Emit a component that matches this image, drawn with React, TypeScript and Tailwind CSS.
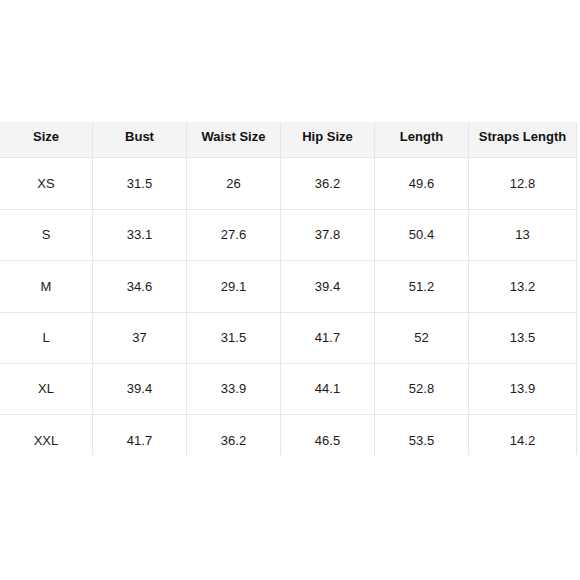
const HEADERS = ["Size", "Bust", "Waist Size", "Hip Size", "Length", "Straps Length"];

const ROWS: { h: string; cells: string[] }[] = [
  { h: "h-[52px]", cells: ["XS", "31.5", "26", "36.2", "49.6", "12.8"] },
  { h: "h-[51px]", cells: ["S", "33.1", "27.6", "37.8", "50.4", "13"] },
  { h: "h-[52px]", cells: ["M", "34.6", "29.1", "39.4", "51.2", "13.2"] },
  { h: "h-[51px]", cells: ["L", "37", "31.5", "41.7", "52", "13.5"] },
  { h: "h-[51px]", cells: ["XL", "39.4", "33.9", "44.1", "52.8", "13.9"] },
  { h: "h-[52px]", cells: ["XXL", "41.7", "36.2", "46.5", "53.5", "14.2"] },
];

const COLS = "grid grid-cols-[93px_94px_94px_94px_94px_108px]";

export default function App() {
  return (
    <div className="h-[580px] w-[580px] bg-white pt-[122px] font-['Liberation_Sans',Arial,sans-serif]">
      <div className="h-[333px] w-[577px] overflow-hidden">
        <div className={`${COLS} h-[36px] bg-[#f4f4f4]`}>
          {HEADERS.map((label) => (
            <div
              key={label}
              className="flex items-center justify-center border-r border-b border-[#e6e6e6] pb-[5px] text-[13px] font-bold text-[#111]"
            >
              {label}
            </div>
          ))}
        </div>

        {ROWS.map((row) => (
          <div key={row.cells[0]} className={`${COLS} ${row.h}`}>
            {row.cells.map((value, i) => (
              <div
                key={i}
                className="flex items-center justify-center border-r border-b border-[#e6e6e6] text-[13px] text-[#1a1a1a]"
              >
                {value}
              </div>
            ))}
          </div>
        ))}
      </div>
    </div>
  );
}
